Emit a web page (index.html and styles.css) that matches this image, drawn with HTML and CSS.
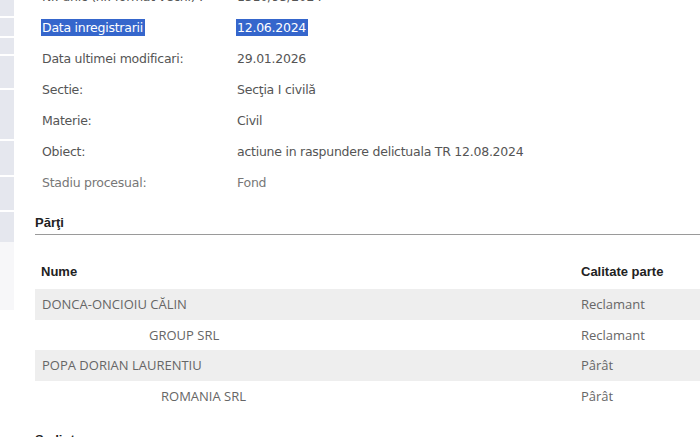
FILE: index.html
```html
<!DOCTYPE html>
<html lang="ro">
<head>
<meta charset="utf-8">
<title>Dosar</title>
<link rel="stylesheet" href="styles.css">
</head>
<body>
<div class="page">
  <aside class="side">
    <div class="blk h16"></div>
    <div class="blk h18"></div>
    <div class="blk h16"></div>
    <div class="blk h32"></div>
    <div class="blk h49"></div>
    <div class="blk h34"></div>
    <div class="blk h33"></div>
    <div class="blk h30"></div>
    <div class="blk faint h68"></div>
  </aside>
  <main class="main">
    <div class="info">
      <div class="row"><span class="lbl">Nr. unic (nr. format vechi) :</span><span class="val">1310/93/2024</span></div>
      <div class="row"><span class="lbl"><span class="sel">Data inregistrarii</span></span><span class="val"><span class="sel">12.06.2024</span></span></div>
      <div class="row"><span class="lbl">Data ultimei modificari:</span><span class="val">29.01.2026</span></div>
      <div class="row"><span class="lbl">Sectie:</span><span class="val">Secţia I civilă</span></div>
      <div class="row"><span class="lbl">Materie:</span><span class="val">Civil</span></div>
      <div class="row"><span class="lbl">Obiect:</span><span class="val">actiune in raspundere delictuala TR 12.08.2024</span></div>
      <div class="row light"><span class="lbl">Stadiu procesual:</span><span class="val">Fond</span></div>
    </div>
    <h2 class="sect">Părţi</h2>
    <div class="tbl">
      <div class="tr th"><span class="c1">Nume</span><span class="c2">Calitate parte</span></div>
      <div class="tr alt"><span class="c1">DONCA-ONCIOIU CĂLIN</span><span class="c2">Reclamant</span></div>
      <div class="tr"><span class="c1 ind1">GROUP SRL</span><span class="c2">Reclamant</span></div>
      <div class="tr alt"><span class="c1">POPA DORIAN LAURENTIU</span><span class="c2">Pârât</span></div>
      <div class="tr"><span class="c1 ind2">ROMANIA SRL</span><span class="c2">Pârât</span></div>
    </div>
    <h2 class="sect next">Sedinte</h2>
  </main>
</div>
</body>
</html>
```

FILE: styles.css
```css
html, body {
  margin: 0;
  padding: 0;
  background: #fff;
  overflow: hidden;
}
body {
  width: 700px;
  height: 437px;
}
.page {
  display: flex;
  align-items: flex-start;
}
.side {
  width: 14px;
  flex: none;
  display: flex;
  flex-direction: column;
  gap: 2px;
}
.blk { background: #e5e7ee; }
.blk.faint { background: #f7f7f9; margin-top: -2px; }
.h16 { height: 16px; }
.h18 { height: 18px; }
.h30 { height: 30px; }
.h32 { height: 32px; }
.h33 { height: 33px; }
.h34 { height: 34px; }
.h49 { height: 49px; }
.h68 { height: 68px; }

.main {
  margin-left: 21px;
  width: 740px;
  flex: none;
}
.info {
  margin-top: -19px;
  font-family: "DejaVu Sans", Verdana, sans-serif;
  font-size: 12.5px;
  letter-spacing: -0.25px;
  color: #555;
}
.row {
  display: flex;
  align-items: center;
  height: 31px;
  padding-left: 7px;
}
.row.light { color: #777; }
.lbl { width: 195px; flex: none; }
.sel {
  background: #3566cc;
  color: #fff;
  padding: 1px 2px 1px 1px;
  margin-left: -1px;
}
.sect {
  margin: 17px 0 0 0;
  font-family: "Liberation Sans", Arial, sans-serif;
  font-size: 13px;
  font-weight: bold;
  line-height: 16px;
  color: #222;
  padding-bottom: 3px;
  border-bottom: 1px solid #9a9a9a;
}
.sect.next {
  margin-top: 21px;
  border-bottom: none;
}
.tbl {
  margin-top: 23px;
  font-family: "Open Sans", "Noto Sans", sans-serif;
  font-size: 13px;
  color: #666;
}
.tr {
  display: flex;
  align-items: center;
  height: 30.5px;
}
.tr.alt { background: #eeeeee; }
.tr.th {
  height: 31px;
  align-items: flex-start;
  padding-top: 6px;
  box-sizing: border-box;
  font-family: "Liberation Sans", Arial, sans-serif;
  font-weight: bold;
  color: #222;
  line-height: 16px;
}
.c1 { width: 540px; flex: none; padding-left: 7px; box-sizing: border-box; }
.th .c1 { padding-left: 6px; }
.c2 { flex: none; padding-left: 6px; }
.ind1 { padding-left: 114px; }
.ind2 { padding-left: 126px; }
```
